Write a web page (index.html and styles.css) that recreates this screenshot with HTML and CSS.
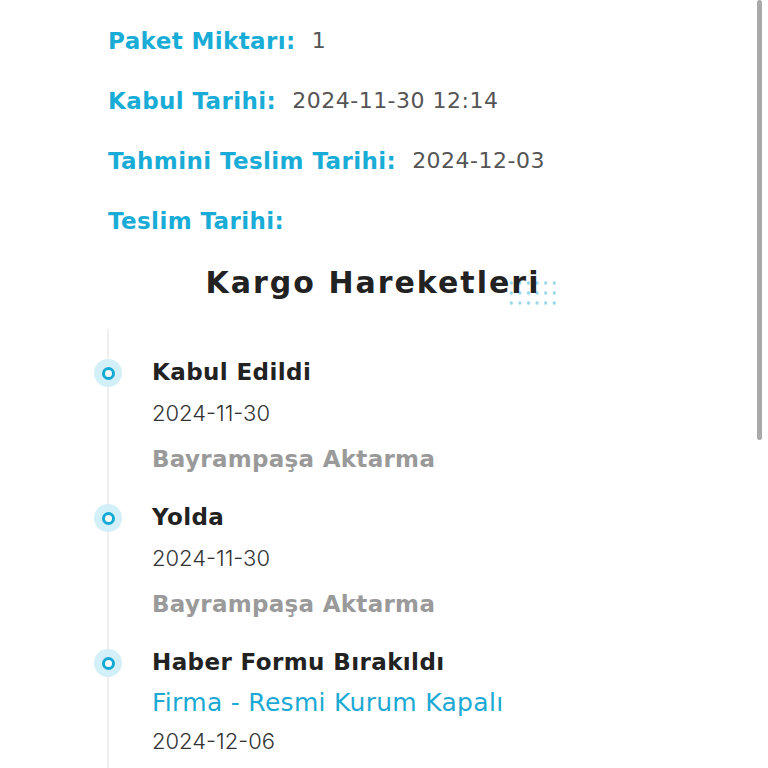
FILE: index.html
```html
<!DOCTYPE html>
<html lang="tr">
<head>
<meta charset="utf-8">
<link rel="stylesheet" href="styles.css">
</head>
<body>
<div class="page">
  <div class="info">
    <div class="row"><span class="label">Paket Miktarı:</span><span class="value">1</span></div>
    <div class="row"><span class="label">Kabul Tarihi:</span><span class="value">2024-11-30 12:14</span></div>
    <div class="row"><span class="label">Tahmini Teslim Tarihi:</span><span class="value">2024-12-03</span></div>
    <div class="row"><span class="label">Teslim Tarihi:</span><span class="value"></span></div>
  </div>
  <h2 class="title"><span class="title-wrap"><span class="dots"></span><span class="title-text">Kargo Hareketleri</span></span></h2>
  <ul class="timeline">
    <li class="item">
      <span class="marker"></span>
      <div class="item-title">Kabul Edildi</div>
      <div class="item-date">2024-11-30</div>
      <div class="item-loc">Bayrampaşa Aktarma</div>
    </li>
    <li class="item">
      <span class="marker"></span>
      <div class="item-title">Yolda</div>
      <div class="item-date">2024-11-30</div>
      <div class="item-loc">Bayrampaşa Aktarma</div>
    </li>
    <li class="item">
      <span class="marker"></span>
      <div class="item-title">Haber Formu Bırakıldı</div>
      <div class="item-sub">Firma - Resmi Kurum Kapalı</div>
      <div class="item-date">2024-12-06</div>
    </li>
  </ul>
</div>
<div class="scroll-thumb"></div>
</body>
</html>
```

FILE: styles.css
```css
html, body {
  margin: 0;
  padding: 0;
  background: #ffffff;
  overflow: hidden;
  height: 768px;
}
body {
  font-family: "DejaVu Sans", Inter, sans-serif;
}
.page {
  width: 746px;
}
.info {
  padding: 11px 0 0 108px;
}
.row {
  height: 60px;
  display: flex;
  align-items: center;
  gap: 16px;
  line-height: 1;
}
.label {
  color: #18acd6;
  font-size: 23px;
  font-weight: 700;
  letter-spacing: 0.4px;
}
.value {
  color: #555555;
  font-size: 22px;
  font-weight: 400;
  letter-spacing: 0.5px;
}
.title {
  margin: -1px 0 0;
  text-align: center;
  font-size: 30px;
  font-weight: 700;
  letter-spacing: 2px;
  color: #222222;
  height: 66px;
  line-height: 66px;
}
.title-wrap {
  position: relative;
  display: inline-block;
}
.title-text {
  position: relative;
  z-index: 1;
}
.dots {
  position: absolute;
  right: -19px;
  top: 28px;
  width: 52px;
  height: 30px;
  background-image: radial-gradient(circle, #9ad8ea 1.4px, transparent 2px);
  background-size: 8.6px 10px;
  z-index: 0;
}
.timeline {
  list-style: none;
  margin: 21px 0 0;
  padding: 0 0 0 152px;
  position: relative;
}
.timeline::before {
  content: "";
  position: absolute;
  left: 107px;
  top: -8px;
  bottom: -100px;
  width: 2px;
  background: #efefef;
}
.item {
  position: relative;
  padding-top: 16px;
  height: 129px;
}
.marker {
  position: absolute;
  left: -58px;
  top: 22px;
  width: 28px;
  height: 28px;
  border-radius: 50%;
  background: #d3eff8;
  display: flex;
  align-items: center;
  justify-content: center;
}
.marker::after {
  content: "";
  width: 7px;
  height: 7px;
  border: 3.5px solid #14a9d4;
  border-radius: 50%;
  background: #ffffff;
}
.item-title {
  font-size: 23px;
  font-weight: 700;
  letter-spacing: 0.4px;
  color: #222222;
  height: 40px;
  line-height: 38px;
}
.item-date {
  font-family: Inter, sans-serif;
  font-size: 22px;
  font-weight: 300;
  color: #333333;
  height: 40px;
  line-height: 40px;
}
.item-loc {
  font-size: 23px;
  font-weight: 700;
  letter-spacing: 0.3px;
  color: #9a9a9a;
  height: 52px;
  line-height: 52px;
}
.item-sub {
  font-size: 25px;
  font-weight: 400;
  letter-spacing: 0.3px;
  color: #1ba9d4;
  height: 38px;
  line-height: 40px;
}
.scroll-thumb {
  position: fixed;
  right: 6px;
  top: 0;
  width: 5px;
  height: 440px;
  border-radius: 3px;
  background: #a9a9a9;
}
```
